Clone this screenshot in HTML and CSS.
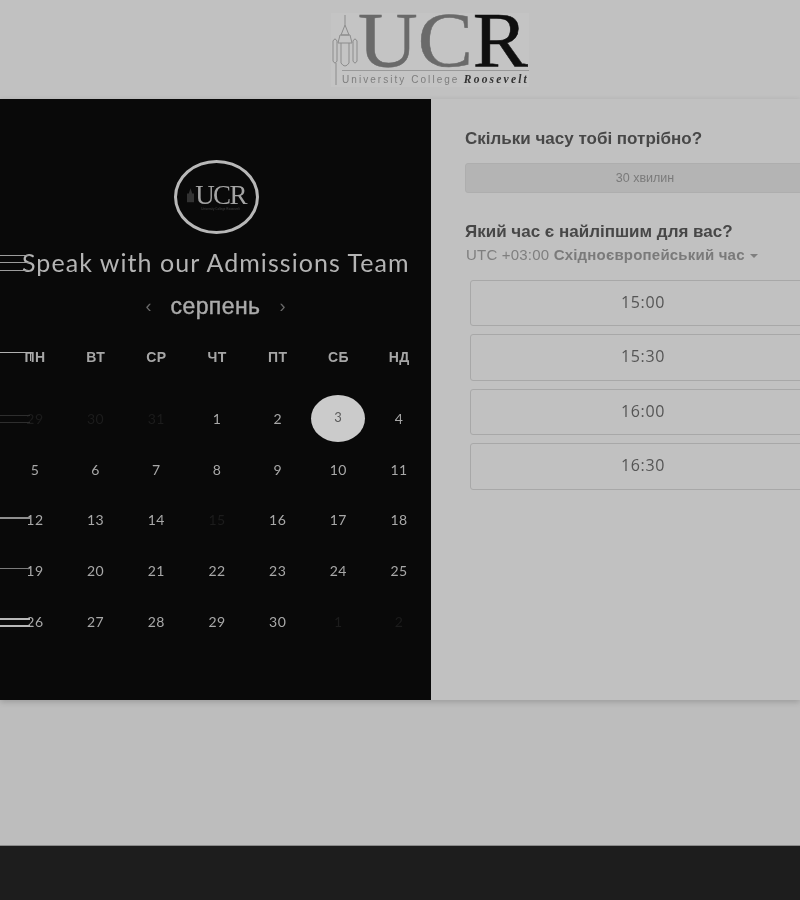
FILE: index.html
```html
<!DOCTYPE html>
<html lang="uk">
<head>
<meta charset="utf-8">
<title>UCR</title>
<link rel="stylesheet" href="styles.css">
</head>
<body>
<div class="page">
  <header class="top">
    <div class="logo">
      <svg class="tower" width="30" height="74" viewBox="0 0 30 74" fill="none" stroke="#8c8c8c" stroke-width="1">
        <path d="M14 2V12M14 12L10 22H18ZM9 22H19L21 30H7ZM2 28V48M6 28V48M2 28Q4 24 6 28M2 48Q4 52 6 48M22 28V48M26 28V48M22 28Q24 24 26 28M22 48Q24 52 26 48M10 30V50M18 30V50M10 50Q14 56 18 50M5 50L5 72"/>
      </svg>
      <div class="logo-main">
        <div class="logo-ucr"><span class="grey">UC</span><span>R</span></div>
        <div class="logo-sub"><span>University College</span><em>Roosevelt</em></div>
      </div>
    </div>
  </header>
  <main class="panel">
    <section class="left">
      <div class="badge">
        <svg class="badge-tower" width="7" height="16" viewBox="0 0 8 18" fill="#333"><path d="M4 0L6 6H8V16H0V6H2Z"/></svg>
        <div class="badge-text"><span class="badge-ucr">UCR</span><span class="badge-sub">University College Roosevelt</span></div>
      </div>
      <h1 class="event">Speak with our Admissions Team</h1>
      <div class="month"><span class="arrow">‹</span><span class="month-name">серпень</span><span class="arrow">›</span></div>
      <div class="grid heads">
        <span>ПН</span><span>ВТ</span><span>СР</span><span>ЧТ</span><span>ПТ</span><span>СБ</span><span>НД</span>
      </div>
      <div class="grid days">
        <span class="off">29</span><span class="off">30</span><span class="off">31</span><span>1</span><span>2</span><span class="sel">3</span><span>4</span>
        <span>5</span><span>6</span><span>7</span><span>8</span><span>9</span><span>10</span><span>11</span>
        <span>12</span><span>13</span><span>14</span><span class="off">15</span><span>16</span><span>17</span><span>18</span>
        <span>19</span><span>20</span><span>21</span><span>22</span><span>23</span><span>24</span><span>25</span>
        <span>26</span><span>27</span><span>28</span><span>29</span><span>30</span><span class="off">1</span><span class="off">2</span>
      </div>
      <i class="ln l1"></i><i class="ln l2"></i><i class="ln l3"></i><i class="ln l4"></i><i class="ln l5"></i>
      <i class="ln l6"></i><i class="ln l7"></i><i class="ln l8"></i><i class="ln l9"></i><i class="ln l10"></i>
    </section>
    <section class="right">
      <h2 class="q">Скільки часу тобі потрібно?</h2>
      <div class="duration">30 хвилин</div>
      <h2 class="q q2">Який час є найліпшим для вас?</h2>
      <div class="tz"><span class="utc">UTC +03:00</span> <b>Східноєвропейський час</b><span class="caret"></span></div>
      <div class="slots">
        <div class="slot">15:00</div>
        <div class="slot">15:30</div>
        <div class="slot">16:00</div>
        <div class="slot">16:30</div>
      </div>
    </section>
  </main>
  <div class="spacer"></div>
  <footer class="foot"></footer>
</div>
</body>
</html>
```
FILE: styles.css
```css
* { box-sizing: border-box; }
html, body { margin: 0; padding: 0; background: #bdbdbd; }
body { font-family: "Liberation Sans", Arial, sans-serif; overflow: hidden; }
.page { width: 800px; height: 900px; display: flex; flex-direction: column; filter: grayscale(1) blur(0.5px); overflow: hidden; }

.top { height: 99px; background: #c1c1c1; display: flex; padding: 13px 0 0 331px; }
.logo { width: 198px; height: 74px; display: flex; background: #c4c4c4; }
.tower { flex: none; }
.logo-main { flex: 1; min-width: 0; }
.logo-ucr { font-family: "Liberation Serif", serif; font-size: 78px; line-height: 54px; height: 56px; color: #0f0f0f; margin-left: -3px; white-space: nowrap; transform: scaleX(1.06); transform-origin: left center; -webkit-text-stroke: 0.5px currentColor; }
.logo-ucr .grey { color: #6a6a6a; }
.logo-sub { display: flex; justify-content: space-between; margin: 1px 0 0 -19px; padding: 2px 0 0 0; font-size: 10px; line-height: 13px; color: #7d7d7d; letter-spacing: 2.05px; border-top: 1px solid #999; white-space: nowrap; }
.logo-sub em { font-family: "Liberation Serif", serif; font-weight: bold; font-size: 11.5px; color: #333; letter-spacing: 2.2px; }

.panel { height: 601px; display: flex; box-shadow: 0 2px 6px rgba(0,0,0,.18); position: relative; }
.left { flex: none; width: 431px; background: #090909; position: relative; padding-top: 61px; color: #b9b9b9; display: flex; flex-direction: column; align-items: center; }
.badge { flex: none; width: 85px; height: 74px; margin-left: 2px; border: 3px solid #b8b8b8; border-radius: 50%; display: flex; align-items: center; justify-content: center; gap: 1px; }
.badge-tower { flex: none; margin-top: -2px; }
.badge-text { display: flex; flex-direction: column; align-items: center; width: 52px; }
.badge-ucr { font-family: "Liberation Serif", serif; font-size: 27px; line-height: 24px; letter-spacing: -1.6px; color: #a4a4a4; }
.badge-sub { font-size: 3px; line-height: 4px; color: #444; white-space: nowrap; }
.event { margin: 13px 0 0 22px; font-family: Lato, sans-serif; font-weight: 400; font-size: 25px; line-height: 30px; color: #b4b4b4; letter-spacing: 1.05px; white-space: nowrap; align-self: flex-start; }
.month { margin-top: 15px; display: flex; align-items: center; gap: 19px; height: 28px; }
.month-name { font-size: 23px; letter-spacing: .4px; line-height: 28px; font-weight: 400; color: #ababab; -webkit-text-stroke: 0.4px #ababab; }
.arrow { font-size: 18px; color: #6a6a6a; line-height: 24px; }
.grid { display: grid; grid-template-columns: repeat(7, 60.7px); width: 425px; margin-left: 4.6px; align-self: flex-start; justify-items: center; align-items: center; }
.heads { margin-top: 29px; height: 16px; font-size: 14px; line-height: 16px; font-weight: bold; color: #a6a6a6; letter-spacing: .3px; }
.days { margin-top: 28px; grid-auto-rows: 50.75px; font-family: Lato, sans-serif; font-size: 14px; color: #a8a8a8; }
.days span { letter-spacing: .5px; }
.days .off { color: #1c1c1c; }
.days .sel { width: 54px; height: 47px; border-radius: 50%; background: #cbcbcb; color: #5c5c5c; display: flex; align-items: center; justify-content: center; padding-bottom: 3px; font-size: 13px; }

.ln { position: absolute; left: 0; width: 30px; height: 1px; background: #a9a9a9; display: block; }
.l1 { top: 156px; background: #9c9c9c; }
.l2 { top: 163px; background: #9c9c9c; }
.l3 { top: 171px; background: #9c9c9c; }
.l4 { top: 253px; width: 31px; height: 9px; background: transparent; border-top: 1.5px solid #b0b0b0; border-right: 1.5px solid #b0b0b0; }
.l5 { top: 316px; background: #2e2e2e; }
.l6 { top: 323px; background: #2e2e2e; }
.l7 { top: 418px; background: #8f8f8f; height: 2px; }
.l8 { top: 469px; background: #7b7b7b; }
.l9 { top: 519px; background: #b8b8b8; height: 2px; }
.l10 { top: 526px; background: #b8b8b8; height: 2px; }

.right { flex: 1; min-width: 0; overflow: hidden; background: #c1c1c1; padding: 30px 0 0 34px; }
.q { margin: 0; font-size: 17px; line-height: 20px; font-weight: bold; color: #474747; white-space: nowrap; }
.duration { margin-top: 14px; width: 360px; height: 30px; background: #b4b4b4; border: 1px solid #aeaeae; border-radius: 3px; font-size: 12.5px; line-height: 28px; color: #7a7a7a; text-align: center; }
.q2 { margin-top: 29px; }
.tz { margin-top: 3px; font-size: 15px; letter-spacing: .2px; line-height: 20px; color: #7f7f7f; margin-left: 1px; white-space: nowrap; }
.tz b { font-weight: bold; color: #7a7a7a; }
.caret { display: inline-block; width: 0; height: 0; border: 4px solid transparent; border-top-color: #7f7f7f; border-bottom: 0; margin-left: 5px; vertical-align: 2px; }
.slots { margin: 15px 0 0 5px; display: flex; flex-direction: column; gap: 8px; }
.slot { width: 346px; height: 46.4px; border: 1px solid #a8a8a8; border-radius: 3px; font-family: "Open Sans", sans-serif; font-size: 16px; letter-spacing: .6px; line-height: 43px; color: #555; text-align: center; }

.spacer { height: 145px; background: #bdbdbd; }
.foot { flex: 1; background: #1d1d1d; border-top: 1px solid #8a8a8a; }
```
